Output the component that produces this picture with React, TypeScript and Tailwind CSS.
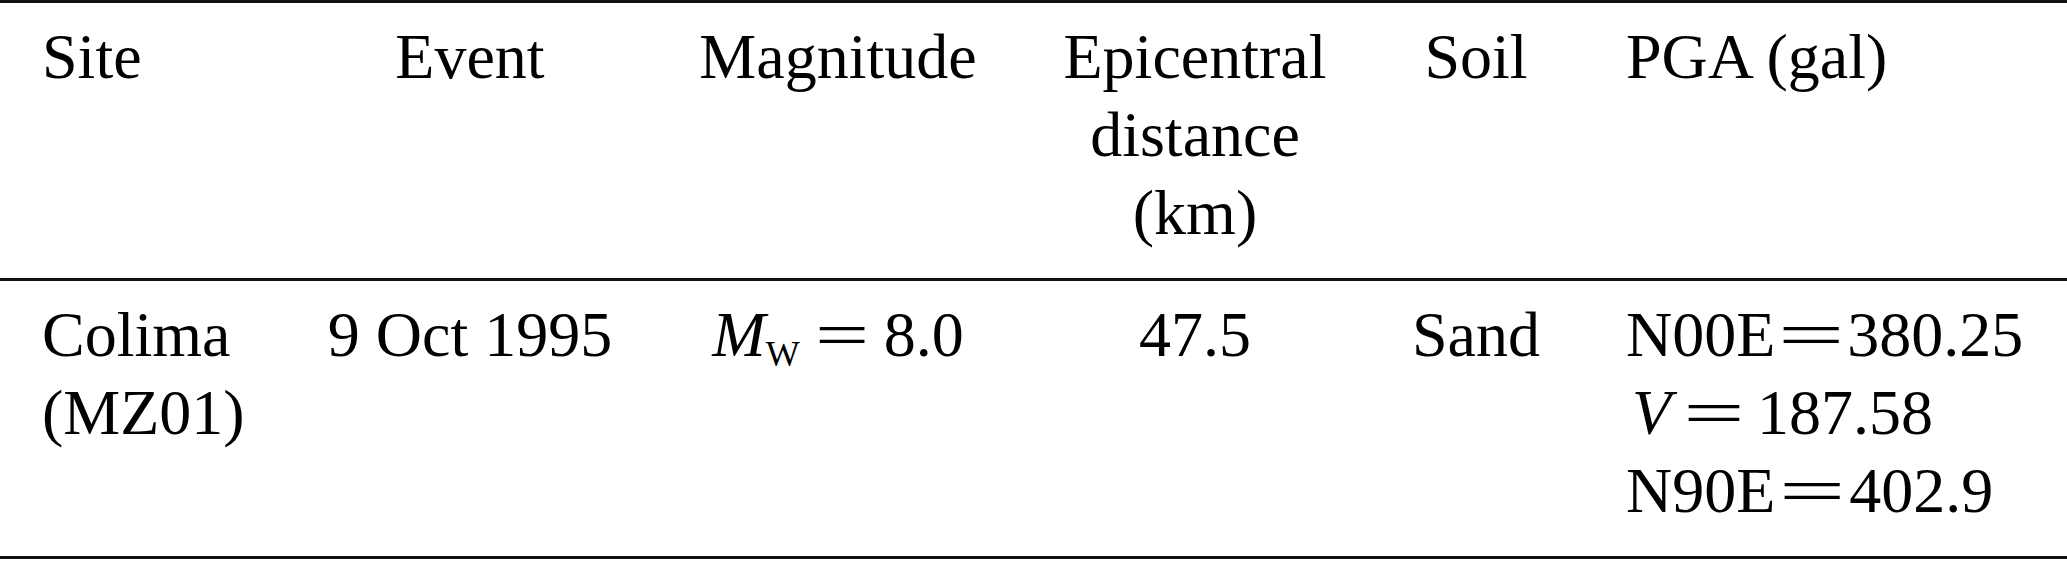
const serif = "font-['Liberation_Serif','Times_New_Roman',serif]"

function Eq({ box, stretch }: { box: string; stretch: string }) {
    return (
        <span className={`inline-block text-center ${box}`}>
            <span className={`inline-block ${stretch}`}>=</span>
        </span>
    )
}

export default function App() {
    return (
        <div className={`w-[2067px] h-[561px] bg-white text-black ${serif} text-[64px] leading-[78px]`}>
            <div className="border-t-[3px] border-b-[3px] border-[#111] grid grid-cols-[300px_340px_396px_318px_244px_1fr] pt-[15px] pb-[26px]">
                <div className="pl-[42px]">Site</div>
                <div className="text-center">Event</div>
                <div className="text-center">Magnitude</div>
                <div className="text-center">
                    Epicentral
                    <br />
                    distance
                    <br />
                    (km)
                </div>
                <div className="text-center">Soil</div>
                <div className="pl-[28px]">PGA (gal)</div>
            </div>
            <div className="border-b-[3px] border-[#111] grid grid-cols-[300px_340px_396px_318px_244px_1fr] pt-[15px] pb-[26px]">
                <div className="pl-[42px]">
                    Colima
                    <br />
                    (MZ01)
                </div>
                <div className="text-center">9 Oct 1995</div>
                <div className="text-center whitespace-nowrap">
                    <span className="italic">M</span>
                    <span className="relative top-[10px] text-[36px]">W</span>
                    <Eq box="w-[84px]" stretch="scale-x-[1.5]" />
                    8.0
                </div>
                <div className="text-center">47.5</div>
                <div className="text-center">Sand</div>
                <div className="pl-[28px] flex flex-col whitespace-nowrap">
                    <span>
                        N00E
                        <Eq box="w-[72px]" stretch="scale-x-[1.85]" />
                        380.25
                    </span>
                    <span>
                        <span className="italic pl-[6px]">V</span>
                        <Eq box="w-[86px]" stretch="scale-x-[1.7]" />
                        187.58
                    </span>
                    <span>
                        N90E
                        <Eq box="w-[74px]" stretch="scale-x-[1.85]" />
                        402.9
                    </span>
                </div>
            </div>
        </div>
    )
}
